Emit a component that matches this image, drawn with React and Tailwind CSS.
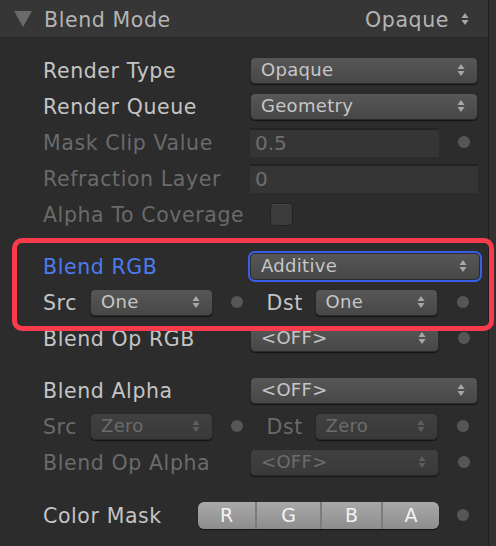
import React from "react";

const F = { fontFamily: '"DejaVu Sans", "Noto Sans", sans-serif' };

function Arrows({ dim }) {
  const c = dim ? "#5e5e5e" : "#a8a8a8";
  return (
    <svg width="8" height="14" viewBox="0 0 8 14" className="shrink-0">
      <polygon points="4,1 7.5,6 0.5,6" fill={c} />
      <polygon points="4,13 7.5,8 0.5,8" fill={c} />
    </svg>
  );
}

function Dot() {
  return <div className="w-[12px] h-[12px] rounded-full bg-[#565656]" />;
}

function Drop({ value, w, dim, blue }) {
  return (
    <div
      className={
        "h-[27px] rounded-[5px] flex items-center justify-between pl-[10px] pr-[12px] text-[18px] tracking-[0.3px] shadow-[0_1px_1px_rgba(0,0,0,0.6)] " +
        (dim
          ? "bg-gradient-to-b from-[#404040] to-[#393939] text-[#6c6c6c] border border-[#2a2a2a]"
          : "bg-gradient-to-b from-[#575757] to-[#474747] text-[#c6c6c6] border border-[#2a2a2a]") +
        (blue ? " outline-2 outline-[#3a5ee6]" : "")
      }
      style={{ width: w }}
    >
      <span className="leading-none">{value}</span>
      <Arrows dim={dim} />
    </div>
  );
}

function Label({ children, dim, blue }) {
  return (
    <div
      className={
        "text-[20.5px] tracking-[0.6px] leading-none pt-[2px] " +
        (blue ? "text-[#4b7bef]" : dim ? "text-[#6a6a6a]" : "text-[#c4c4c4]")
      }
    >
      {children}
    </div>
  );
}

function Row({ children, className = "" }) {
  return <div className={"h-[36px] flex items-center " + className}>{children}</div>;
}

function FieldRow({ label, dim, blue, children }) {
  return (
    <Row>
      <div className="w-[207px] shrink-0 whitespace-nowrap">
        <Label dim={dim} blue={blue}>{label}</Label>
      </div>
      {children}
    </Row>
  );
}

function SrcDst({ dim, src, dst }) {
  return (
    <Row>
      <div className="w-[47px] shrink-0">
        <Label dim={dim}>Src</Label>
      </div>
      <Drop value={src} w={125} dim={dim} />
      <div className="w-[48px] flex justify-center shrink-0">
        <Dot />
      </div>
      <div className="w-[6px] shrink-0" />
      <div className="w-[48px] shrink-0">
        <Label dim={dim}>Dst</Label>
      </div>
      <Drop value={dst} w={126} dim={dim} />
      <div className="w-[50px] flex justify-center shrink-0">
        <Dot />
      </div>
    </Row>
  );
}

export default function App() {
  return (
    <div className="w-[496px] h-[546px] bg-[#2c2c2c] flex relative overflow-hidden" style={F}>
      <div className="w-[488px] flex flex-col">
        <div className="h-[38px] bg-[#363636] border-b border-[#262626] flex items-center pl-[14px] pr-[19px] shrink-0">
          <svg width="18" height="16" viewBox="0 0 18 16" className="mt-[1px]">
            <polygon points="0,0 18,0 9,16" fill="#6a6a6a" />
          </svg>
          <span className="ml-[12px] pt-[3px] text-[20.5px] tracking-[0.6px] text-[#b4b4b4] leading-none">Blend Mode</span>
          <span className="ml-auto pt-[3px] text-[20.5px] tracking-[0.6px] text-[#b4b4b4] leading-none mr-[12px]">Opaque</span>
          <Arrows />
        </div>
        <div className="pl-[43px] pt-[14px] flex flex-col">
          <FieldRow label="Render Type">
            <Drop value="Opaque" w={228} />
          </FieldRow>
          <FieldRow label="Render Queue">
            <Drop value="Geometry" w={228} />
          </FieldRow>
          <FieldRow label="Mask Clip Value" dim>
            <div className="w-[194px] h-[29px] bg-[#353535] border-t-2 border-[#232323] flex items-center pl-[5px] text-[20px] text-[#6e6e6e]">0.5</div>
            <div className="w-[50px] flex justify-center">
              <Dot />
            </div>
          </FieldRow>
          <FieldRow label="Refraction Layer" dim>
            <div className="w-[228px] h-[29px] bg-[#353535] border-t-2 border-[#232323] flex items-center pl-[5px] text-[20px] text-[#6e6e6e]">0</div>
          </FieldRow>
          <Row>
            <div className="w-[227px] shrink-0 whitespace-nowrap">
              <Label dim>Alpha To Coverage</Label>
            </div>
            <div className="w-[23px] h-[23px] rounded-[4px] bg-[#3b3b3b] border border-[#222] shadow-[inset_0_1px_0_rgba(255,255,255,0.05)]" />
          </Row>
          <div className="h-[16px]" />
          <FieldRow label="Blend RGB" blue>
            <Drop value="Additive" w={230} blue />
          </FieldRow>
          <SrcDst src="One" dst="One" />
          <FieldRow label="Blend Op RGB">
            <Drop value="<OFF>" w={194} />
            <div className="w-[50px] flex justify-center">
              <Dot />
            </div>
          </FieldRow>
          <div className="h-[16px]" />
          <FieldRow label="Blend Alpha">
            <Drop value="<OFF>" w={228} />
          </FieldRow>
          <SrcDst dim src="Zero" dst="Zero" />
          <FieldRow label="Blend Op Alpha" dim>
            <Drop value="<OFF>" w={194} dim />
            <div className="w-[50px] flex justify-center">
              <Dot />
            </div>
          </FieldRow>
          <div className="h-[17px]" />
          <Row>
            <div className="w-[155px] shrink-0 whitespace-nowrap">
              <Label>Color Mask</Label>
            </div>
            <div className="w-[245px] h-[27px] rounded-[6px] overflow-hidden flex bg-gradient-to-b from-[#a9a9a9] to-[#8d8d8d] shadow-[0_1px_1px_rgba(0,0,0,0.6)] text-[19px] text-[#f2f2f2]">
              <div className="w-[59px] flex items-center justify-center border-r-2 border-[#7c7c7c]">R</div>
              <div className="w-[65px] flex items-center justify-center border-r-2 border-[#7c7c7c]">G</div>
              <div className="w-[61px] flex items-center justify-center border-r-2 border-[#7c7c7c]">B</div>
              <div className="flex-1 flex items-center justify-center">A</div>
            </div>
            <div className="w-[50px] flex justify-center">
              <Dot />
            </div>
          </Row>
        </div>
      </div>
      <div className="w-[1px] bg-[#1c1c1c]" />
      <div className="flex-1 bg-[#313131]" />
      <div className="absolute left-[12px] top-[238px] w-[482px] h-[93px] border-[5px] border-[#fb3a4c] rounded-[10px] pointer-events-none" />
    </div>
  );
}
